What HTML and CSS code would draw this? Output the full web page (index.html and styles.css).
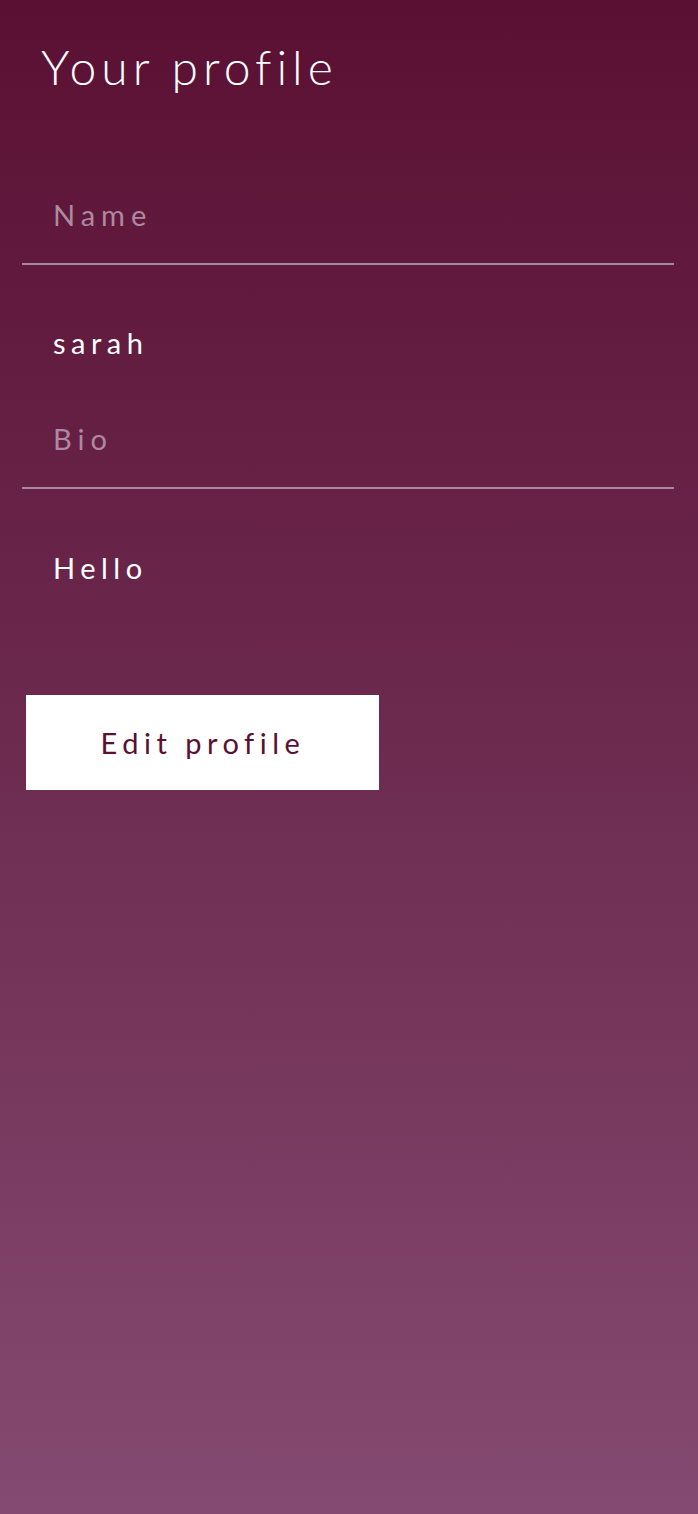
FILE: index.html
```html
<!DOCTYPE html>
<html>
<head>
<meta charset="utf-8">
<link rel="stylesheet" href="styles.css">
</head>
<body>
<main class="page">
  <h1 class="title">Your profile</h1>
  <div class="field">
    <div class="label">Name</div>
  </div>
  <div class="value value-name">sarah</div>
  <div class="field field-bio">
    <div class="label">Bio</div>
  </div>
  <div class="value value-bio">Hello</div>
  <button class="btn">Edit profile</button>
</main>
</body>
</html>
```
FILE: styles.css
```css
html, body {
  margin: 0;
  padding: 0;
}
body {
  font-family: "Lato", "Open Sans", sans-serif;
}
.page {
  box-sizing: border-box;
  min-height: 1514px;
  padding: 0 24px 0 22px;
  background: linear-gradient(180deg, #5a1033 0%, #6d2b50 50%, #854a71 100%);
  display: flex;
  flex-direction: column;
  align-items: stretch;
}
.title {
  margin: 37px 0 0 19px;
  font-size: 48px;
  font-weight: 300;
  line-height: 60px;
  letter-spacing: 5px;
  color: #ffffff;
}
.field {
  margin-top: 98px;
  border-bottom: 2px solid #ab889d;
  padding: 0 0 28px 31px;
}
.field-bio {
  margin-top: 56px;
}
.label {
  font-size: 29px;
  line-height: 40px;
  letter-spacing: 6px;
  color: #ad8aa0;
}
.value {
  padding-left: 31px;
  font-size: 29px;
  line-height: 40px;
  letter-spacing: 5.5px;
  color: #ffffff;
}
.value-name {
  margin-top: 58px;
}
.value-bio {
  margin-top: 59px;
}
.btn {
  align-self: flex-start;
  margin: 107px 0 0 4px;
  width: 353px;
  height: 95px;
  border: none;
  background: #ffffff;
  color: #5a1033;
  font-family: "Lato", "Open Sans", sans-serif;
  font-size: 29px;
  letter-spacing: 5.5px;
  padding: 0 0 0 1px;
}
```
